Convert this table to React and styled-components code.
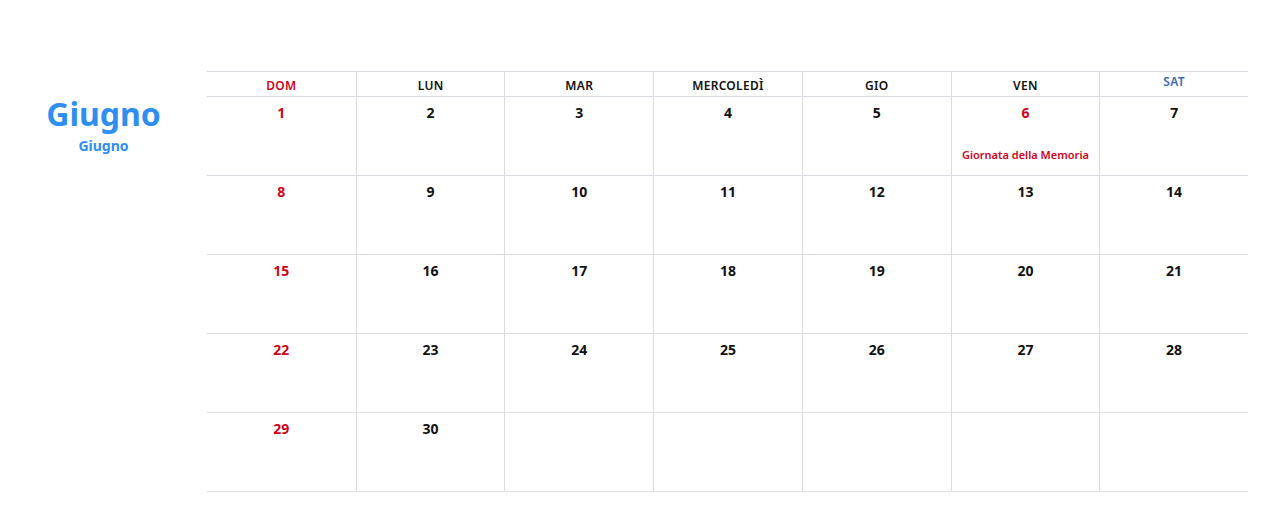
import React from "react";
import styled, { createGlobalStyle } from "styled-components";

const GlobalStyle = createGlobalStyle`
  body {
    margin: 0;
    background: #ffffff;
    font-family: "Noto Sans", "Liberation Sans", sans-serif;
  }
`;

const Page = styled.div`
  display: flex;
  width: 1280px;
  height: 522px;
  padding-top: 71px;
  box-sizing: border-box;
`;

const Aside = styled.div`
  width: 207px;
  padding-top: 24px;
  display: flex;
  flex-direction: column;
  align-items: center;
`;

const MonthTitle = styled.div`
  font-size: 32px;
  font-weight: 700;
  line-height: 38px;
  color: #2f8ff0;
`;

const MonthSub = styled.div`
  font-size: 14px;
  font-weight: 700;
  line-height: 18px;
  color: #2f8ff0;
  margin-top: 4px;
`;

const Grid = styled.div`
  width: 1041px;
  display: grid;
  grid-template-columns: repeat(7, 1fr);
  grid-template-rows: 26px repeat(5, 79px);
  align-self: flex-start;
`;

const HeadCell = styled.div`
  border-top: 1px solid #dedae4;
  border-bottom: 1px solid #dedae4;
  border-left: ${(p) => (p.$first ? "none" : "1px solid #dedae4")};
  font-size: 12px;
  font-weight: 600;
  letter-spacing: 0.3px;
  color: ${(p) => p.$color || "#111"};
  display: flex;
  justify-content: center;
  align-items: center;
  padding-top: ${(p) => (p.$raise ? "0" : "2px")};
  padding-bottom: ${(p) => (p.$raise ? "5px" : "0")};
  box-sizing: border-box;
`;

const DayCell = styled.div`
  border-bottom: 1px solid #dedae4;
  border-left: ${(p) => (p.$first ? "none" : "1px solid #dedae4")};
  display: flex;
  flex-direction: column;
  align-items: center;
  padding-top: 7px;
  box-sizing: border-box;
`;

const DayNum = styled.div`
  font-size: 14px;
  font-weight: 700;
  line-height: 18px;
  color: ${(p) => (p.$red ? "#d0021b" : "#111")};
`;

const Holiday = styled.div`
  margin-top: 25px;
  font-size: 11px;
  font-weight: 600;
  color: #d0021b;
`;

const heads = [
  { t: "DOM", c: "#d0021b" },
  { t: "LUN" },
  { t: "MAR" },
  { t: "MERCOLEDÌ" },
  { t: "GIO" },
  { t: "VEN" },
  { t: "SAT", c: "#3a6ab0", raise: true },
];

const holidays = { 6: "Giornata della Memoria" };

export default function App() {
  const cells = [];
  for (let i = 0; i < 35; i++) {
    const d = i + 1;
    cells.push(d <= 30 ? d : null);
  }

  return (
    <>
      <GlobalStyle />
      <Page>
        <Aside>
          <MonthTitle>Giugno</MonthTitle>
          <MonthSub>Giugno</MonthSub>
        </Aside>
        <Grid>
          {heads.map((h, i) => (
            <HeadCell key={h.t} $first={i === 0} $color={h.c} $raise={h.raise}>
              {h.t}
            </HeadCell>
          ))}
          {cells.map((d, i) => (
            <DayCell key={i} $first={i % 7 === 0}>
              {d && (
                <DayNum $red={i % 7 === 0 || holidays[d]}>{d}</DayNum>
              )}
              {d && holidays[d] && <Holiday>{holidays[d]}</Holiday>}
            </DayCell>
          ))}
        </Grid>
      </Page>
    </>
  );
}
